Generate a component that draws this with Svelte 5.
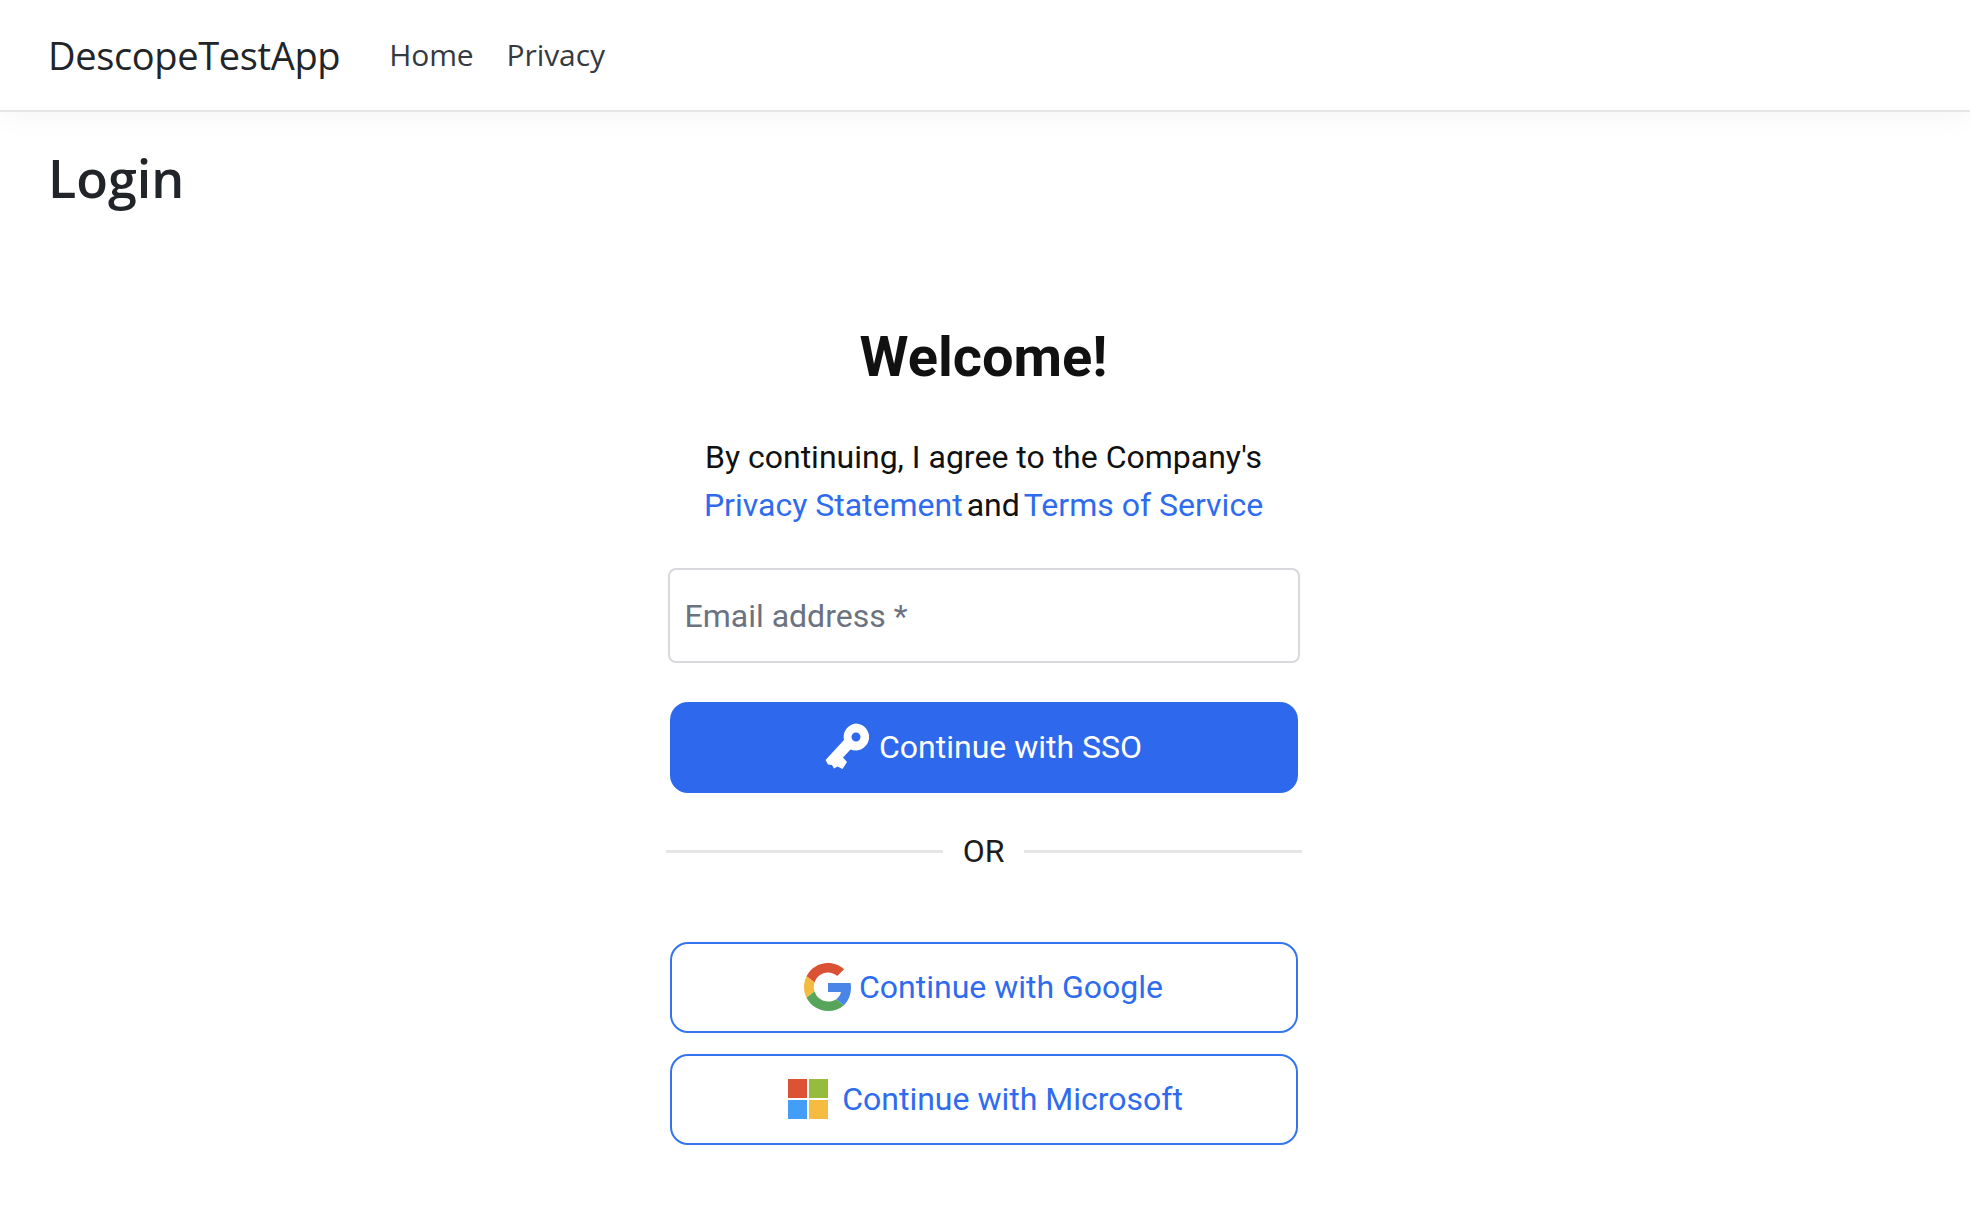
<script>
  let email = ''
</script>

<header class="navbar">
  <a class="brand" href="#top">DescopeTestApp</a>
  <nav class="links">
    <a href="#home">Home</a>
    <a href="#privacy">Privacy</a>
  </nav>
</header>

<main class="page">
  <h1 class="title">Login</h1>

  <section class="widget">
    <h2 class="welcome">Welcome!</h2>
    <p class="terms">
      <span class="terms-line">By continuing, I agree to the Company's</span>
      <span class="terms-line links-line">
        <a href="#statement">Privacy Statement</a>
        <span>and</span>
        <a href="#terms">Terms of Service</a>
      </span>
    </p>

    <input class="email" type="email" placeholder="Email address *" bind:value={email} />

    <button class="btn primary" type="button">
      <svg class="key" viewBox="0 0 44 47" aria-hidden="true">
        <path fill="#fff" fill-rule="evenodd" d="M31 .5A13.500 13.500 0 1 1 25.500 26.500L18 34.500l4 4.500-4.500 7-5-2.500L9 45.500 7 42l-4-.5L.5 37 19 17A13.500 13.500 0 0 1 31 .5zM31 9.500a4.500 4.500 0 1 0 0 9 4.500 4.500 0 0 0 0-9z"/>
      </svg>
      <span>Continue with SSO</span>
    </button>

    <div class="divider"><span>OR</span></div>

    <button class="btn outline google" type="button">
      <svg class="g-logo" viewBox="0 0 48 48" aria-hidden="true">
        <path fill="#da5133" d="M24 9.500c3.540 0 6.710 1.220 9.210 3.600l6.850-6.850C35.900 2.380 30.470 0 24 0 14.620 0 6.510 5.380 2.560 13.220l7.980 6.190C12.430 13.720 17.740 9.500 24 9.500z"/>
        <path fill="#4a86e8" d="M46.980 24.550c0-1.570-.15-3.090-.38-4.550H24v9.020h12.940c-.58 2.960-2.260 5.480-4.780 7.180l7.730 6c4.510-4.180 7.090-10.360 7.090-17.650z"/>
        <path fill="#f4bb41" d="M10.530 28.590c-.48-1.450-.76-2.990-.76-4.590s.27-3.140.76-4.590l-7.980-6.190C.92 16.460 0 20.120 0 24c0 3.880.92 7.540 2.560 10.780l7.970-6.190z"/>
        <path fill="#57a55a" d="M24 48c6.480 0 11.930-2.130 15.890-5.810l-7.730-6c-2.150 1.450-4.920 2.300-8.160 2.300-6.260 0-11.570-4.220-13.470-9.910l-7.980 6.190C6.510 42.620 14.620 48 24 48z"/>
      </svg>
      <span>Continue with Google</span>
    </button>

    <button class="btn outline microsoft" type="button">
      <span class="ms-logo" aria-hidden="true">
        <i class="red"></i><i class="green"></i><i class="blue"></i><i class="yellow"></i>
      </span>
      <span>Continue with Microsoft</span>
    </button>
  </section>
</main>

<style>
  :global(body) {
    margin: 0;
    background: #fff;
    color: #212529;
    font-family: "Open Sans", "Noto Sans", sans-serif;
  }

  .navbar {
    display: flex;
    align-items: center;
    gap: 49px;
    height: 112px;
    padding: 0 48px 2px;
    box-sizing: border-box;
    border-bottom: 2px solid #e3e5e7;
    box-shadow: 0 4px 28px rgba(0, 0, 0, 0.045);
  }

  a {
    text-decoration: none;
  }

  .brand {
    padding-top: 2px;
    color: #212529;
    font-size: 38px;
    letter-spacing: -0.35px;
  }

  .links {
    display: flex;
    gap: 33px;
  }

  .links a {
    color: #343a40;
    font-size: 30px;
    letter-spacing: -0.1px;
  }

  .page {
    padding: 35px 51px 0 48px;
  }

  .title {
    margin: 0;
    font-size: 52px;
    line-height: 62px;
    font-weight: 600;
    color: #212529;
  }

  .widget {
    display: flex;
    flex-direction: column;
    align-items: center;
    width: 636px;
    margin: 114px auto 0 auto;
    font-family: Roboto, sans-serif;
    color: #111;
  }

  .welcome {
    margin: 0;
    font-size: 56px;
    line-height: 68px;
    font-weight: 700;
  }

  .terms {
    display: flex;
    flex-direction: column;
    align-items: center;
    margin: 42px 0 0;
    font-size: 32px;
    line-height: 48px;
  }

  .terms-line {
    white-space: nowrap;
  }

  .links-line {
    display: flex;
    gap: 4px;
  }

  .links-line a {
    color: #2f6bee;
  }

  .email {
    box-sizing: border-box;
    width: 632px;
    height: 95px;
    margin-top: 39px;
    padding: 0 15px;
    border: 2px solid #d8d9dc;
    border-radius: 8px;
    background: #fff;
    font: 32px Roboto, sans-serif;
    outline: none;
  }

  .email::placeholder {
    color: #6b7280;
    opacity: 1;
  }

  .btn {
    display: flex;
    align-items: center;
    justify-content: center;
    box-sizing: border-box;
    width: 628px;
    height: 91px;
    padding: 0 0 2px;
    border-radius: 18px;
    font: 32px Roboto, sans-serif;
    cursor: pointer;
  }

  .primary {
    margin-top: 39px;
    gap: 10px;
    border: none;
    background: #2e68ec;
    color: #fff;
  }

  .key {
    width: 44px;
    height: 47px;
  }

  .divider {
    display: flex;
    align-items: center;
    gap: 20px;
    width: 636px;
    height: 46px;
    margin-top: 35px;
    font-size: 32px;
    color: #1c1c1c;
  }

  .divider::before,
  .divider::after {
    content: "";
    flex: 1;
    height: 3px;
    background: #e6e6e6;
  }

  .outline {
    border: 2px solid #3474f0;
    background: #fff;
    color: #2f6bee;
  }

  .google {
    margin-top: 68px;
    gap: 7px;
  }

  .g-logo {
    width: 48px;
    height: 48px;
  }

  .microsoft {
    margin-top: 21px;
    padding-left: 4px;
    gap: 14px;
  }

  .ms-logo {
    display: grid;
    grid-template-columns: 19px 19px;
    grid-template-rows: 19px 19px;
    gap: 2px;
  }

  .ms-logo i {
    display: block;
  }

  .red { background: #dc5235; }
  .green { background: #97bb3d; }
  .blue { background: #449ef7; }
  .yellow { background: #f5bc41; }
</style>
